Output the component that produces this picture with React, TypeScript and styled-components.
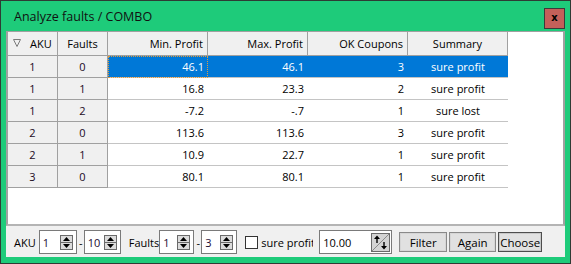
import React from "react";
import styled, { createGlobalStyle } from "styled-components";

const Global = createGlobalStyle`
  html, body { margin: 0; padding: 0; background: #fff; }
  body { font-family: "Open Sans", "Noto Sans", sans-serif; }
  * { box-sizing: border-box; }
`;

const FONT = `"Open Sans", "Noto Sans", sans-serif`;

const Window = styled.div`
  width: 571px;
  height: 264px;
  background: #1ecb7a;
  border: 1px solid #2e3b34;
  display: flex;
  flex-direction: column;
`;

const TitleBar = styled.div`
  height: 30px;
  display: flex;
  align-items: center;
  justify-content: space-between;
  padding: 0 5px 0 13px;
  flex: none;
`;

const Title = styled.span`
  font-family: ${FONT};
  font-size: 12.5px;
  color: #111;
`;

const CloseButton = styled.div`
  width: 21px;
  height: 21px;
  margin-top: 4px;
  background: #c4605a;
  border: 1px solid #3b3b3b;
  display: flex;
  align-items: center;
  justify-content: center;
  font-family: "DejaVu Sans", sans-serif;
  font-weight: bold;
  font-size: 10px;
  color: #000;
  line-height: 1;
`;

const Client = styled.div`
  flex: 1;
  margin: 0 5px 6px 5px;
  background: #f0f0f0;
  display: flex;
  flex-direction: column;
`;

const GridArea = styled.div`
  flex: 1;
  background: #fff;
  border-top: 1px solid #a0a0a0;
  border-left: 2px solid #a0a0a0;
  border-right: 2px solid #a0a0a0;
  border-bottom: 2px solid #b4b4b4;
`;

const Row = styled.div<{ $h: number }>`
  display: flex;
  height: ${(p) => p.$h}px;
`;

const HeadCell = styled.div<{ $w: number; $align: string; $sorted?: boolean }>`
  width: ${(p) => p.$w}px;
  flex: none;
  background: #f0f0f0;
  border-right: 1px solid #a0a0a0;
  border-bottom: 1px solid #a0a0a0;
  display: flex;
  align-items: center;
  justify-content: ${(p) => p.$align};
  padding: ${(p) => (p.$sorted ? "0 4px 0 5px" : "0 4px")};
  font-family: ${FONT};
  font-size: 11px;
  color: #000;
  white-space: nowrap;
  gap: 9px;
`;

const FixedCell = styled.div<{ $w: number }>`
  width: ${(p) => p.$w}px;
  flex: none;
  background: #f0f0f0;
  border-right: 1px solid #a0a0a0;
  border-bottom: 1px solid #a0a0a0;
  display: flex;
  align-items: center;
  justify-content: center;
  font-family: ${FONT};
  font-size: 11px;
  color: #1a0a1e;
`;

const DataCell = styled.div<{ $w: number; $align: string; $sel: boolean; $focus?: boolean }>`
  width: ${(p) => p.$w}px;
  flex: none;
  background: ${(p) => (p.$sel ? "#0078d7" : "#fff")};
  border-bottom: 1px solid #c4c4c4;
  display: flex;
  align-items: center;
  justify-content: ${(p) => p.$align};
  padding: 0 4px;
  font-family: ${FONT};
  font-size: 11px;
  color: ${(p) => (p.$sel ? "#fff" : "#000")};
  white-space: nowrap;
  outline: ${(p) => (p.$focus ? "1px dotted #e39b3c" : "none")};
  outline-offset: -1px;
`;

const SortMark = styled.svg`
  flex: none;
  margin-bottom: 2px;
`;

const Bottom = styled.div`
  height: 31px;
  flex: none;
  display: flex;
  align-items: center;
  padding: 1px 0 0 8px;
  font-family: ${FONT};
  font-size: 11px;
  color: #000;
`;

const Label = styled.span<{ $ml?: number; $mr?: number }>`
  margin-left: ${(p) => p.$ml ?? 0}px;
  margin-right: ${(p) => p.$mr ?? 0}px;
  white-space: nowrap;
`;

const Dash = styled.span`
  width: 6px;
  text-align: center;
  margin: 0 0 0 1px;
`;

const SpinBox = styled.div<{ $w: number }>`
  width: ${(p) => p.$w}px;
  height: 24px;
  background: #fff;
  border: 1px solid #7a7a7a;
  display: flex;
  align-items: center;
  justify-content: space-between;
  padding: 0 3px 0 3px;
  color: #1a0a30;
`;

const SpinButtons = styled.div`
  display: flex;
  flex-direction: column;
  width: 13px;
  height: 15px;
  margin-top: 1px;
`;

const SpinHalf = styled.div`
  flex: 1;
  background: #dcdcdc;
  border: 1px solid #6a6a6a;
  display: flex;
  align-items: center;
  justify-content: center;
  & + & { border-top: none; }
`;

const CheckBox = styled.div`
  width: 13px;
  height: 13px;
  background: #fff;
  border: 1px solid #333;
  margin-left: 8px;
  flex: none;
`;

const ClipLabel = styled.span`
  width: 52px;
  overflow: hidden;
  white-space: nowrap;
  margin-left: 3px;
`;

const EditBox = styled.div`
  width: 73px;
  height: 24px;
  background: #fff;
  border: 1px solid #7a7a7a;
  display: flex;
  align-items: center;
  justify-content: space-between;
  padding: 0 0 0 3px;
  margin-left: 6px;
`;

const Button = styled.div<{ $w: number; $default?: boolean; $ml?: number }>`
  width: ${(p) => p.$w}px;
  height: 20px;
  background: #e1e1e1;
  border: 1px solid ${(p) => (p.$default ? "#4d4d4d" : "#8a8a8a")};
  box-shadow: inset 0 0 0 1px ${(p) => (p.$default ? "#c8c8c8" : "#d6d6d6")};
  display: flex;
  align-items: center;
  justify-content: center;
  margin-left: ${(p) => p.$ml ?? 2}px;
  font-family: ${FONT};
  font-size: 11.5px;
  color: #000;
`;

const Arrow = ({ up }: { up: boolean }) => (
  <svg width="7" height="4" viewBox="0 0 7 4">
    {up ? <path d="M0 4 L3.5 0 L7 4 Z" fill="#000" /> : <path d="M0 0 L7 0 L3.5 4 Z" fill="#000" />}
  </svg>
);

const Spin = ({ value, w }: { value: string; w: number }) => (
  <SpinBox $w={w}>
    <span>{value}</span>
    <SpinButtons>
      <SpinHalf>
        <Arrow up />
      </SpinHalf>
      <SpinHalf>
        <Arrow up={false} />
      </SpinHalf>
    </SpinButtons>
  </SpinBox>
);

const UpDownIcon = () => (
  <svg width="19" height="19" viewBox="0 0 19 19" style={{ marginRight: 1 }}>
    <rect x="0.5" y="0.5" width="18" height="18" fill="#d4d4d4" stroke="#6a6a6a" />
    <path d="M1 18 L18 1" stroke="#8a8a8a" strokeWidth="1" />
    <path d="M3 6 L6 2.5 L9 6 Z" fill="#000" />
    <rect x="5.3" y="5" width="1.4" height="5" fill="#000" />
    <path d="M10 13 L13 16.5 L16 13 Z" fill="#000" />
    <rect x="12.3" y="9" width="1.4" height="5" fill="#000" />
  </svg>
);

type Col = { title: string; w: number; head: string; data: string };
const cols: Col[] = [
  { title: "AKU", w: 50, head: "flex-start", data: "center" },
  { title: "Faults", w: 50, head: "center", data: "center" },
  { title: "Min. Profit", w: 100, head: "flex-end", data: "flex-end" },
  { title: "Max. Profit", w: 100, head: "flex-end", data: "flex-end" },
  { title: "OK Coupons", w: 100, head: "flex-end", data: "flex-end" },
  { title: "Summary", w: 100, head: "center", data: "center" },
];

const rows = [
  ["1", "0", "46.1", "46.1", "3", "sure profit"],
  ["1", "1", "16.8", "23.3", "2", "sure profit"],
  ["1", "2", "-7.2", "-.7", "1", "sure lost"],
  ["2", "0", "113.6", "113.6", "3", "sure profit"],
  ["2", "1", "10.9", "22.7", "1", "sure profit"],
  ["3", "0", "80.1", "80.1", "1", "sure profit"],
];

export default function App() {
  return (
    <>
      <Global />
      <Window>
        <TitleBar>
          <Title>Analyze faults / COMBO</Title>
          <CloseButton>x</CloseButton>
        </TitleBar>
        <Client>
          <GridArea>
            <Row $h={24}>
              {cols.map((c, i) => (
                <HeadCell key={c.title} $w={c.w} $align={c.head} $sorted={i === 0}>
                  {i === 0 && (
                    <SortMark width="8" height="8" viewBox="0 0 8 8">
                      <path d="M0.5 0.5 L7.5 0.5 L4 7.5 Z" fill="none" stroke="#7a7a7a" />
                    </SortMark>
                  )}
                  {c.title}
                </HeadCell>
              ))}
            </Row>
            {rows.map((r, ri) => (
              <Row $h={22} key={ri}>
                {r.map((v, ci) =>
                  ci < 2 ? (
                    <FixedCell key={ci} $w={cols[ci].w}>
                      {v}
                    </FixedCell>
                  ) : (
                    <DataCell
                      key={ci}
                      $w={cols[ci].w}
                      $align={cols[ci].data}
                      $sel={ri === 0}
                      $focus={ri === 0 && ci === 2}
                    >
                      {v}
                    </DataCell>
                  )
                )}
              </Row>
            ))}
          </GridArea>
          <Bottom>
            <Label $mr={3}>AKU</Label>
            <Spin value="1" w={38} />
            <Dash>-</Dash>
            <Spin value="10" w={37} />
            <Label $ml={8}>Faults</Label>
            <Spin value="1" w={35} />
            <Dash>-</Dash>
            <Spin value="3" w={36} />
            <CheckBox />
            <ClipLabel>sure profit</ClipLabel>
            <EditBox>
              <span>10.00</span>
              <UpDownIcon />
            </EditBox>
            <Button $w={48} $ml={7}>Filter</Button>
            <Button $w={47}>Again</Button>
            <Button $w={44} $default $ml={2}>Choose</Button>
          </Bottom>
        </Client>
      </Window>
    </>
  );
}
